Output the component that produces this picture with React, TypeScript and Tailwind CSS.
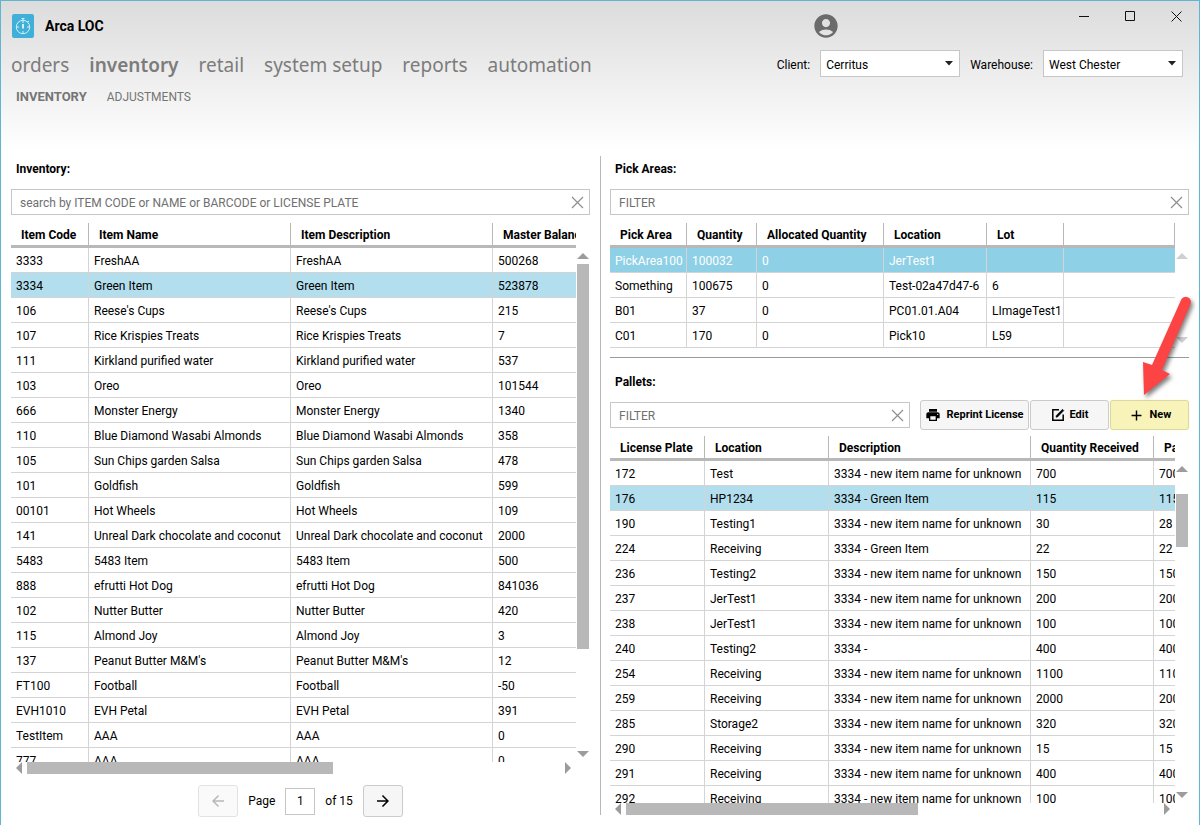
import React, { useState } from 'react'
import { MdAccountCircle, MdAdd, MdArrowBack, MdArrowForward, MdPrint } from 'react-icons/md'
import clsx from 'clsx'

const tabs = ['orders', 'inventory', 'retail', 'system setup', 'reports', 'automation']

const items = [
  ['3333', 'FreshAA', '500268'],
  ['3334', 'Green Item', '523878'],
  ['106', "Reese's Cups", '215'],
  ['107', 'Rice Krispies Treats', '7'],
  ['111', 'Kirkland purified water', '537'],
  ['103', 'Oreo', '101544'],
  ['666', 'Monster Energy', '1340'],
  ['110', 'Blue Diamond Wasabi Almonds', '358'],
  ['105', 'Sun Chips garden Salsa', '478'],
  ['101', 'Goldfish', '599'],
  ['00101', 'Hot Wheels', '109'],
  ['141', 'Unreal Dark chocolate and coconut', '2000'],
  ['5483', '5483 Item', '500'],
  ['888', 'efrutti Hot Dog', '841036'],
  ['102', 'Nutter Butter', '420'],
  ['115', 'Almond Joy', '3'],
  ['137', "Peanut Butter M&M's", '12'],
  ['FT100', 'Football', '-50'],
  ['EVH1010', 'EVH Petal', '391'],
  ['TestItem', 'AAA', '0'],
  ['777', 'AAA', '0'],
]

const pickAreas = [
  ['PickArea100', '100032', '0', 'JerTest1', '', ''],
  ['Something', '100675', '0', 'Test-02a47d47-6', '6', ''],
  ['B01', '37', '0', 'PC01.01.A04', 'LImageTest1', ''],
  ['C01', '170', '0', 'Pick10', 'L59', ''],
]

const unknown = '3334 - new item name for unknown'

const pallets = [
  ['172', 'Test', unknown, '700', '700'],
  ['176', 'HP1234', '3334 - Green Item', '115', '115'],
  ['190', 'Testing1', unknown, '30', '28'],
  ['224', 'Receiving', '3334 - Green Item', '22', '22'],
  ['236', 'Testing2', unknown, '150', '150'],
  ['237', 'JerTest1', unknown, '200', '200'],
  ['238', 'JerTest1', unknown, '100', '100'],
  ['240', 'Testing2', '3334 -', '400', '400'],
  ['254', 'Receiving', unknown, '1100', '1100'],
  ['259', 'Receiving', unknown, '2000', '2000'],
  ['285', 'Storage2', unknown, '320', '320'],
  ['290', 'Receiving', unknown, '15', '15'],
  ['291', 'Receiving', unknown, '400', '400'],
  ['292', 'Receiving', unknown, '100', '100'],
]

type GridProps = {
  label: string
  columns: { name: string; width: string }[]
  rows: string[][]
  selected: number
  focused?: boolean
  closed?: boolean
}

function DataGrid({ label, columns, rows, selected, focused, closed }: GridProps) {
  return (
    <div className="min-w-0 flex-1 overflow-hidden">
      <table aria-label={label} className="w-full table-fixed border-separate border-spacing-0 text-left whitespace-nowrap">
        <colgroup>
          {columns.map((c, i) => (
            <col key={i} className={c.width} />
          ))}
        </colgroup>
        <thead>
          <tr className="h-[25px]">
            {columns.map((c, i) => (
              <th key={i} className="relative border-b-3 border-[#b8b8b8] p-0 pt-[2px] pl-[10px] font-bold">
                {c.name}
                {(closed || i < columns.length - 1) && <span className="absolute inset-y-0 right-0 w-px bg-[#b8b8b8]" />}
              </th>
            ))}
          </tr>
        </thead>
        <tbody>
          {rows.map((row, r) => (
            <tr
              key={r}
              className={clsx('h-[25px]', r === selected && (focused ? 'bg-[#8ed0e6] text-white' : 'bg-[#b2deee]'))}
            >
              {row.map((cell, c) => (
                <td
                  key={c}
                  className={clsx('border-b border-[#d4d4d4] p-0 pt-[2px] pl-[5px]', c < row.length - 1 && 'border-r')}
                >
                  {cell}
                </td>
              ))}
            </tr>
          ))}
        </tbody>
      </table>
    </div>
  )
}

function Triangle({ dir, faded }: { dir: 'up' | 'down' | 'left' | 'right'; faded?: boolean }) {
  const shapes = {
    up: 'M0 6 6 0l6 6z',
    down: 'M0 0h12L6 6z',
    left: 'M6 0v12L0 6z',
    right: 'M0 0v12l6-6z',
  }
  const vertical = dir === 'up' || dir === 'down'
  return (
    <svg width={vertical ? 12 : 6} height={vertical ? 6 : 12} className={clsx('shrink-0', faded ? 'fill-[#cfcfcf]' : 'fill-[#9c9c9c]')}>
      <path d={shapes[dir]} />
    </svg>
  )
}

function ClearableInput({ label, placeholder, className }: { label: string; placeholder: string; className?: string }) {
  const [value, setValue] = useState('')
  return (
    <div className={clsx('flex h-[26px] items-center border border-[#c6c6c6] bg-white pr-[5px] pl-2', className)}>
      <input
        aria-label={label}
        placeholder={placeholder}
        value={value}
        onChange={(e) => setValue(e.target.value)}
        className="min-w-0 flex-1 pt-[2px] outline-none placeholder:text-[#707070]"
      />
      <button aria-label={`Clear ${label}`} onClick={() => setValue('')}>
        <svg width="13" height="13" fill="none" stroke="#8f8f8f" strokeWidth="1.2">
          <path d="m1 1 11 11M12 1 1 12" />
        </svg>
      </button>
    </div>
  )
}

function Picker({ id, label, value }: { id: string; label: string; value: string }) {
  return (
    <div className="flex items-center gap-[10px]">
      <label htmlFor={id} className="pt-[2px]">{label}</label>
      <div className="relative">
        <select id={id} defaultValue={value} className="block h-[27px] w-[140px] appearance-none border border-[#c6c6c6] bg-white pt-[2px] pl-[5px]">
          <option>{value}</option>
        </select>
        <svg width="8" height="5" className="pointer-events-none absolute top-[11px] right-[7px] fill-[#222]">
          <path d="M0 0h8L4 4.500z" />
        </svg>
      </div>
    </div>
  )
}

function LogoIcon() {
  return (
    <svg width="22" height="24" viewBox="0 0 22 24" fill="none" stroke="#d3f1fb">
      <rect width="22" height="24" rx="2" fill="#41b0d8" stroke="none" />
      <circle cx="11" cy="13" r="6.700" />
      <path d="M9.500 4.500h3M11 4.500V9M11 17v2.500M4.500 13H7M15 13h2.500M15.500 8l1.500-1" />
      <path d="M11 10v4.500" strokeWidth="2" />
    </svg>
  )
}

function EditIcon() {
  return (
    <svg width="14" height="14" viewBox="0 0 14 14" fill="none" stroke="#000" strokeWidth="1.500">
      <path d="M8 1.800H1.800v10.400h10.400V6.500" />
      <path d="M5 9.200 5.300 7.500 11.500 1.300l1.300 1.300L6.600 8.900z" fill="#000" strokeWidth=".6" />
    </svg>
  )
}

const toolButton =
  'flex h-[30px] items-center justify-center gap-[5px] rounded-[3px] border border-[#cbcbcb] bg-[#f6f6f6] text-[11px] font-bold whitespace-nowrap'

export default function App() {
  const [page, setPage] = useState('1')

  return (
    <div className="flex h-screen flex-col overflow-hidden border border-b-0 border-[#5fb6d3] bg-white bg-[linear-gradient(#dcdcdc,#fff_150px)] font-[Roboto,sans-serif] text-[12px] leading-4 text-black">
      <header className="h-[155px] shrink-0">
        <div className="flex h-[49px] items-center pl-[11px]">
          <LogoIcon />
          <h1 className="ml-[11px] text-[14px] font-bold">Arca LOC</h1>
          <button aria-label="Account" className="mr-[221px] ml-auto">
            <MdAccountCircle size={28} className="text-[#6b6b6b]" />
          </button>
          <div className="flex self-start">
            <button aria-label="Minimize" className="flex h-[30px] w-[46px] items-center justify-center">
              <svg width="10" height="11" stroke="#111">
                <path d="M0 5.500h10" />
              </svg>
            </button>
            <button aria-label="Maximize" className="flex h-[30px] w-[46px] items-center justify-center">
              <svg width="10" height="10" fill="none" stroke="#111">
                <path d="M.5.500h9v9h-9z" />
              </svg>
            </button>
            <button aria-label="Close" className="flex h-[30px] w-[46px] items-center justify-center">
              <svg width="11" height="11" fill="none" stroke="#111">
                <path d="m.5.500 10 10m0-10-10 10" />
              </svg>
            </button>
          </div>
        </div>

        <div className="flex items-start justify-between pr-4 pl-[10px]">
          <nav className="flex gap-5 font-['Noto_Sans',sans-serif] text-[19px] leading-[30px] text-[#7c7c7c]">
            {tabs.map((t) => (
              <a key={t} href="#" className={clsx(t === 'inventory' && 'font-semibold')}>
                {t}
              </a>
            ))}
          </nav>
          <div className="flex gap-[10px]">
            <Picker id="client" label="Client:" value="Cerritus" />
            <Picker id="warehouse" label="Warehouse:" value="West Chester" />
          </div>
        </div>

        <nav className="flex gap-5 pt-[9px] pl-[15px] text-[#757575]">
          <a href="#" className="text-[13px] font-bold">INVENTORY</a>
          <a href="#">ADJUSTMENTS</a>
        </nav>
      </header>

      <main className="mx-[10px] mb-[10px] grid min-h-0 flex-1 grid-cols-[minmax(0,1fr)_20px_minmax(0,1fr)]">
        <section className="flex min-h-0 flex-col">
          <h2 className="mt-[5px] mb-3 pl-[5px] font-bold">Inventory:</h2>
          <ClearableInput label="inventory search" placeholder="search by ITEM CODE or NAME or BARCODE or LICENSE PLATE" />
          <div className="mt-2 flex min-h-0 flex-1 overflow-hidden">
            <DataGrid
              label="Inventory"
              columns={[
                { name: 'Item Code', width: 'w-[78px]' },
                { name: 'Item Name', width: 'w-[202px]' },
                { name: 'Item Description', width: 'w-[202px]' },
                { name: 'Master Balance', width: 'w-auto' },
              ]}
              rows={items.map(([code, name, balance]) => [code, name, name, balance])}
              selected={1}
            />
            <div className="ml-px flex w-[13px] flex-col pt-[30px] pb-[5px]">
              <Triangle dir="up" />
              <div className="mt-[5px] h-[385px] w-3 bg-[#b8b8b8]" />
              <span className="flex-1" />
              <Triangle dir="down" />
            </div>
          </div>
          <div className="mr-[14px] flex h-3 shrink-0 items-center px-[5px]">
            <Triangle dir="left" />
            <div className="mr-auto ml-[5px] h-3 w-[306px] bg-[#b8b8b8]" />
            <Triangle dir="right" />
          </div>
          <div className="mt-[13px] flex h-7 items-center justify-center gap-[10px]">
            <button aria-label="Previous page" disabled className="flex h-8 w-10 items-center justify-center rounded-[3px] border border-[#e2e2e2] bg-[#fafafa] text-[#b8b8b8]">
              <MdArrowBack size={18} />
            </button>
            <label htmlFor="page">Page</label>
            <input
              id="page"
              value={page}
              onChange={(e) => setPage(e.target.value)}
              className="h-[27px] w-[30px] border border-[#c6c6c6] text-center outline-none"
            />
            <span>of 15</span>
            <button aria-label="Next page" className="flex h-8 w-10 items-center justify-center rounded-[3px] border border-[#cbcbcb] bg-[#f6f6f6]">
              <MdArrowForward size={18} />
            </button>
          </div>
        </section>

        <div className="ml-[10px] w-px bg-[#b4b9c0]" />

        <section className="flex min-h-0 flex-col">
          <h2 className="mt-[5px] mb-3 pl-[5px] font-bold">Pick Areas:</h2>
          <ClearableInput label="pick area filter" placeholder="FILTER" />
          <div className="mt-2 flex shrink-0">
            <DataGrid
              label="Pick Areas"
              columns={[
                { name: 'Pick Area', width: 'w-[77px]' },
                { name: 'Quantity', width: 'w-[70px]' },
                { name: 'Allocated Quantity', width: 'w-[127px]' },
                { name: 'Location', width: 'w-[103px]' },
                { name: 'Lot', width: 'w-[77px]' },
                { name: '', width: 'w-auto' },
              ]}
              rows={pickAreas}
              selected={0}
              focused
              closed
            />
            <div className="ml-px flex w-[13px] flex-col justify-between pt-[30px] pb-[5px]">
              <Triangle dir="up" faded />
              <Triangle dir="down" faded />
            </div>
          </div>
          <hr className="mt-[9px] border-[#9a9a9a]" />

          <h2 className="mt-4 mb-[10px] pl-[5px] font-bold">Pallets:</h2>
          <div className="flex items-center">
            <ClearableInput label="pallet filter" placeholder="FILTER" className="mr-[10px] flex-1" />
            <div className="flex gap-px">
              <button className={clsx(toolButton, 'w-[109px]')}>
                <MdPrint size={16} /> Reprint License
              </button>
              <button className={clsx(toolButton, 'w-[79px]')}>
                <EditIcon /> Edit
              </button>
              <div className="relative">
                <button className="flex h-[30px] w-[79px] items-center justify-center gap-[5px] rounded-[3px] border border-[#dcd8a6] bg-[#f8f3b9] text-[11px] font-bold shadow-[0_0_2px_#f8f3b9]">
                  <MdAdd size={17} /> New
                </button>
                <svg
                  width="60"
                  height="112"
                  viewBox="0 0 60 112"
                  className="pointer-events-none absolute right-[-7px] bottom-[28px] drop-shadow-[2px_3px_2px_rgba(0,0,0,0.5)]"
                >
                  <path d="M8 105 7 72l9 3L45 10a5 5 0 0 1 9.500 4L26 80l8 4z" fill="#fd4444" />
                </svg>
              </div>
            </div>
          </div>
          <div className="mt-[6px] flex min-h-0 flex-1 overflow-hidden">
            <DataGrid
              label="Pallets"
              columns={[
                { name: 'License Plate', width: 'w-[95px]' },
                { name: 'Location', width: 'w-[124px]' },
                { name: 'Description', width: 'w-[202px]' },
                { name: 'Quantity Received', width: 'w-[123px]' },
                { name: 'Pallet Quantity', width: 'w-auto' },
              ]}
              rows={pallets}
              selected={1}
            />
            <div className="ml-px flex w-[13px] flex-col pt-[30px] pb-[5px]">
              <Triangle dir="up" />
              <div className="mt-[22px] h-[53px] w-3 bg-[#b8b8b8]" />
              <span className="flex-1" />
              <Triangle dir="down" />
            </div>
          </div>
          <div className="mr-[14px] flex h-3 shrink-0 items-center px-[5px]">
            <Triangle dir="left" />
            <div className="mr-auto ml-[5px] h-3 w-[292px] bg-[#b8b8b8]" />
            <Triangle dir="right" />
          </div>
        </section>
      </main>
    </div>
  )
}
